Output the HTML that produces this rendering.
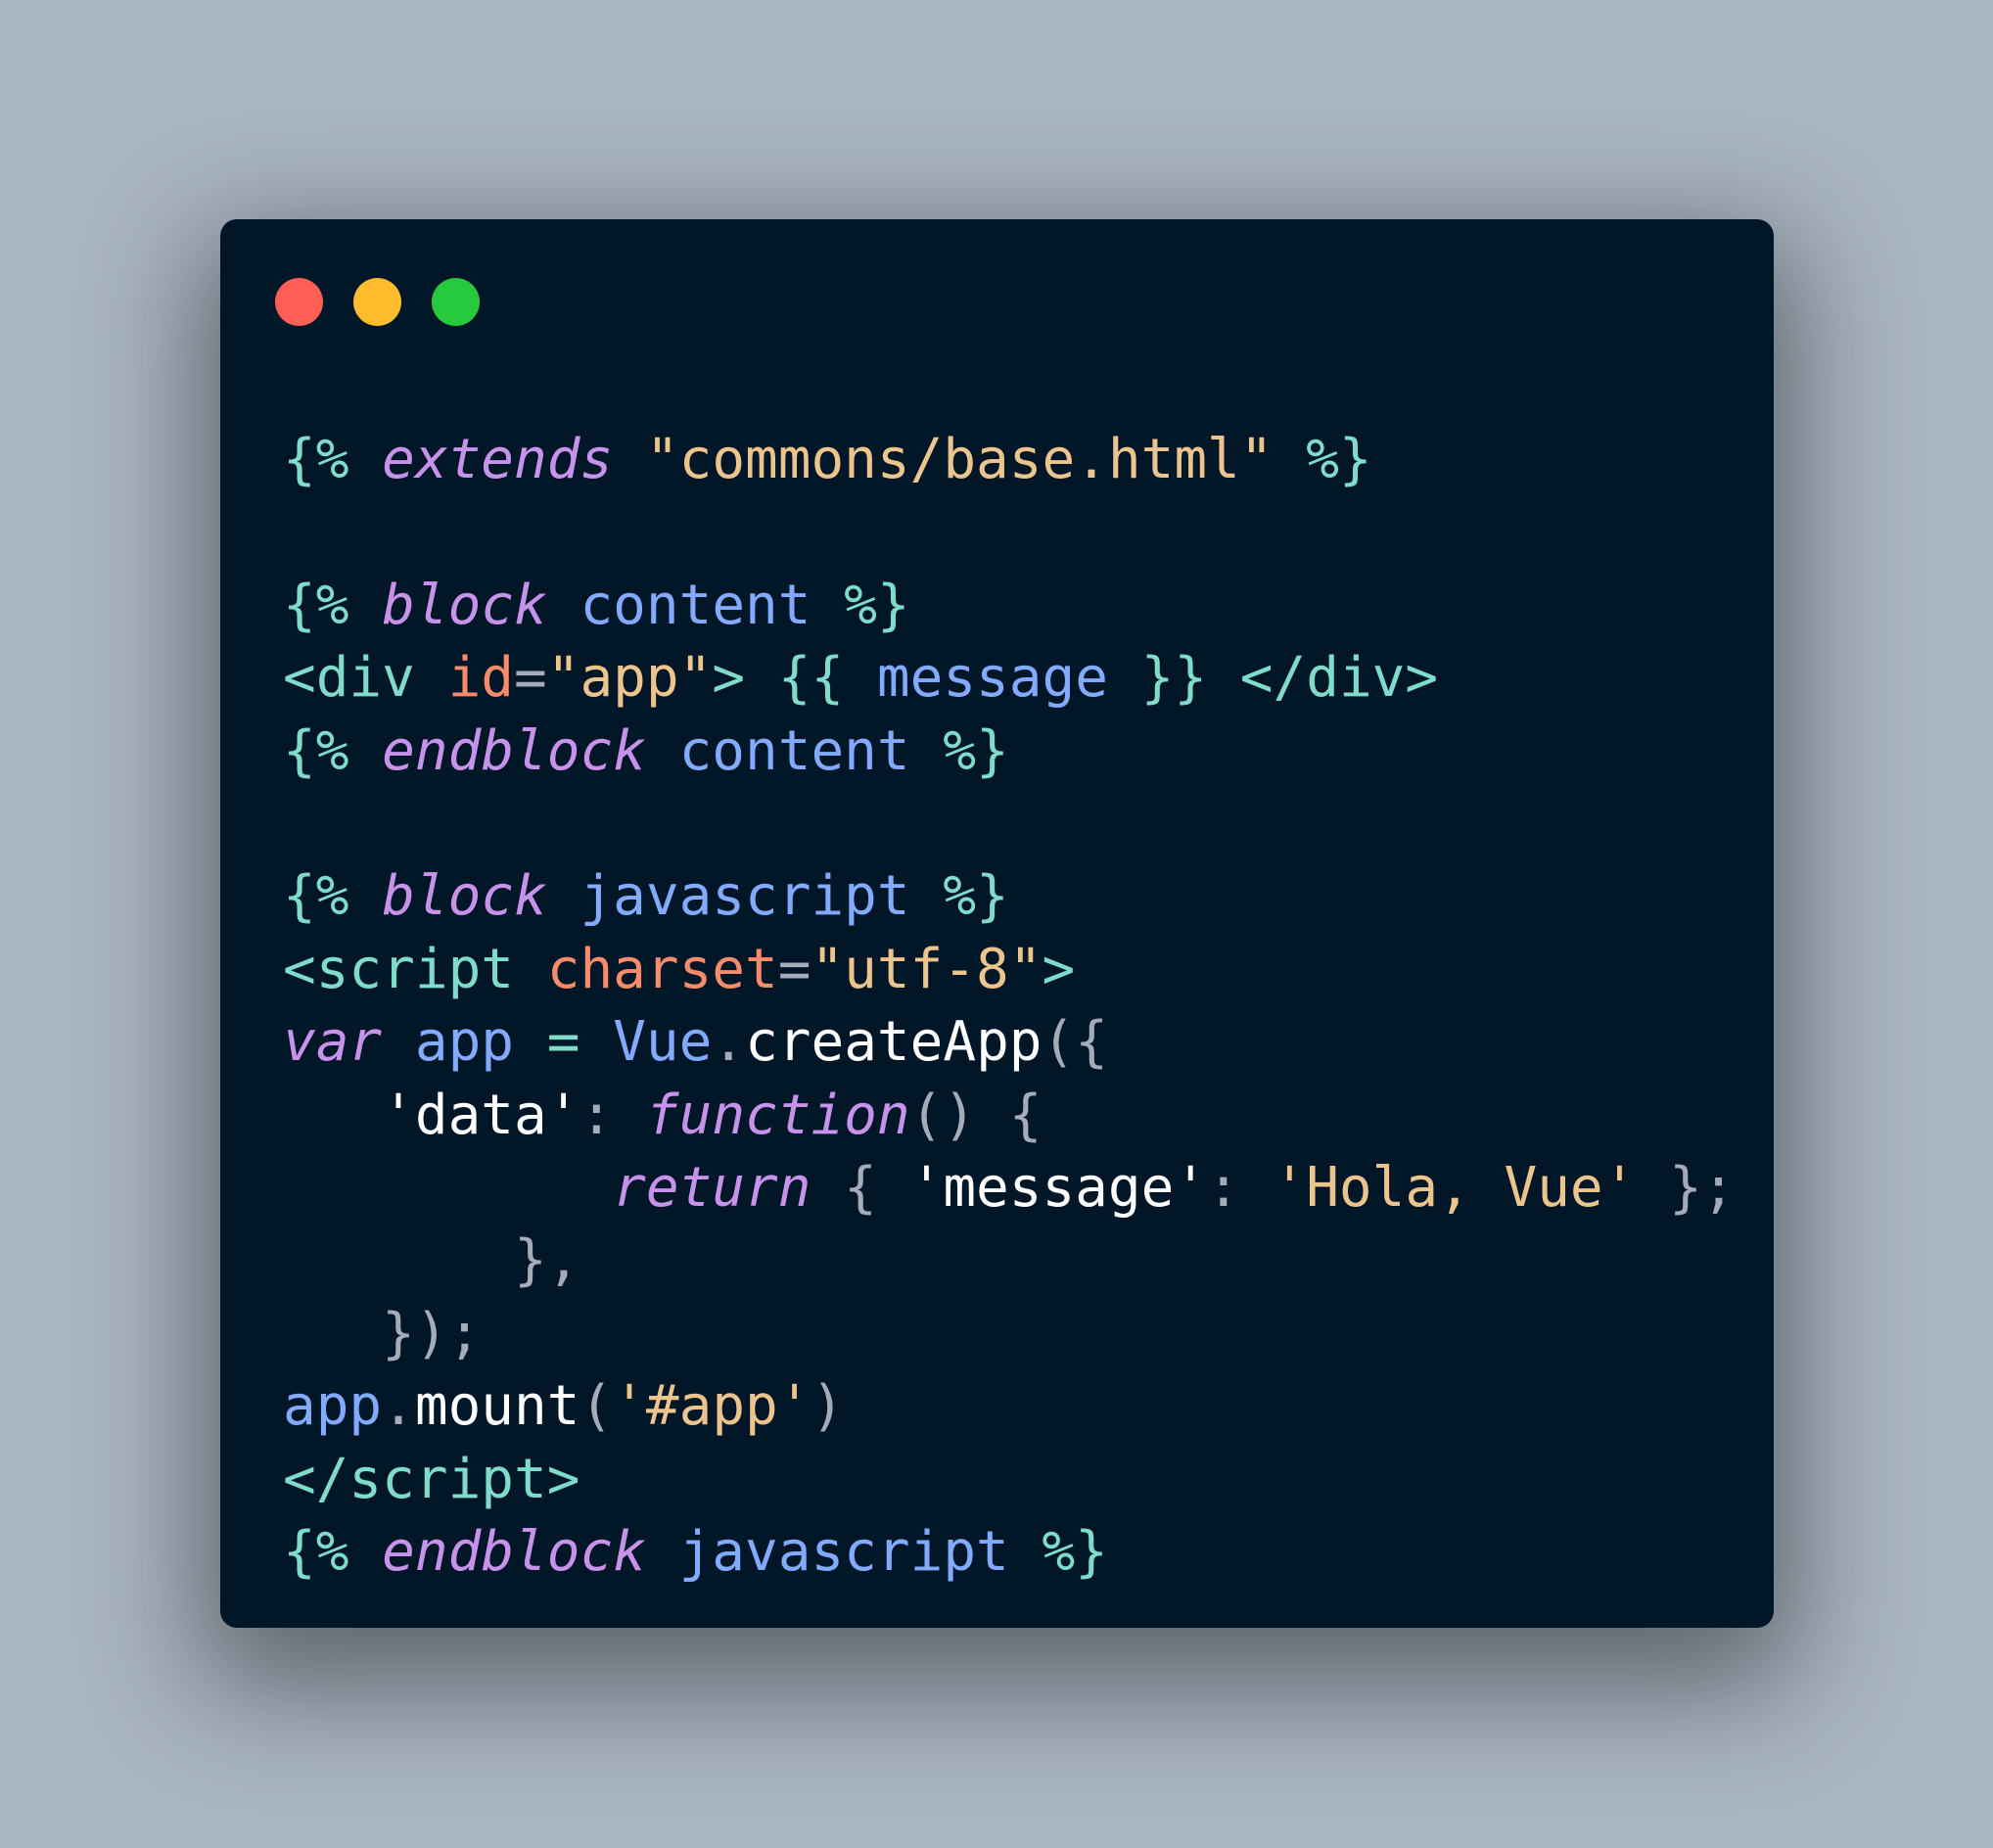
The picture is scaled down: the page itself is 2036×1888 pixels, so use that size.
<!DOCTYPE html>
<html><head><meta charset="utf-8"><style>
html,body{margin:0;padding:0}
body{width:2036px;height:1888px;background:#a9b5c1;position:relative;overflow:hidden}
.win{position:absolute;left:225px;top:224px;width:1587px;height:1439px;background:#011627;border-radius:17px;box-shadow:0 40px 120px 20px rgba(0,0,0,.45)}
.dot{position:absolute;top:284px;width:49px;height:49px;border-radius:50%}
pre{position:absolute;left:289px;top:433px;margin:0;font-family:"DejaVu Sans Mono","Liberation Mono",monospace;font-size:56px;line-height:74.4px;color:#fff;white-space:pre}
.t{color:#7fdbca}.k{color:#c792ea;font-style:italic}.b{color:#82aaff}.s{color:#ecc48d}.o{color:#f78c6c}.g{color:#a3acb8}.w{color:#fff}
</style></head><body>
<div class="win"></div>
<div class="dot" style="left:281px;background:#ff5f56"></div>
<div class="dot" style="left:361px;background:#ffbd2e"></div>
<div class="dot" style="left:441px;background:#27c93f"></div>
<pre><span class="t">{%</span> <span class="k">extends</span> <span class="s">"commons/base.html"</span> <span class="t">%}</span>

<span class="t">{%</span> <span class="k">block</span> <span class="b">content</span> <span class="t">%}</span>
<span class="t">&lt;div</span> <span class="o">id</span><span class="g">=</span><span class="s">"app"</span><span class="t">&gt;</span> <span class="t">{{</span> <span class="b">message</span> <span class="t">}}</span> <span class="t">&lt;/div&gt;</span>
<span class="t">{%</span> <span class="k">endblock</span> <span class="b">content</span> <span class="t">%}</span>

<span class="t">{%</span> <span class="k">block</span> <span class="b">javascript</span> <span class="t">%}</span>
<span class="t">&lt;script</span> <span class="o">charset</span><span class="g">=</span><span class="s">"utf-8"</span><span class="t">&gt;</span>
<span class="k">var</span> <span class="b">app</span> <span class="t">=</span> <span class="b">Vue</span><span class="g">.</span><span class="w">createApp</span><span class="g">({</span>
   <span class="w">'data'</span><span class="g">:</span> <span class="k">function</span><span class="g">()</span> <span class="g">{</span>
          <span class="k">return</span> <span class="g">{</span> <span class="w">'message'</span><span class="g">:</span> <span class="s">'Hola, Vue'</span> <span class="g">};</span>
       <span class="g">},</span>
   <span class="g">});</span>
<span class="b">app</span><span class="g">.</span><span class="w">mount</span><span class="g">(</span><span class="s">'#app'</span><span class="g">)</span>
<span class="t">&lt;/script&gt;</span>
<span class="t">{%</span> <span class="k">endblock</span> <span class="b">javascript</span> <span class="t">%}</span></pre>
</body></html>
